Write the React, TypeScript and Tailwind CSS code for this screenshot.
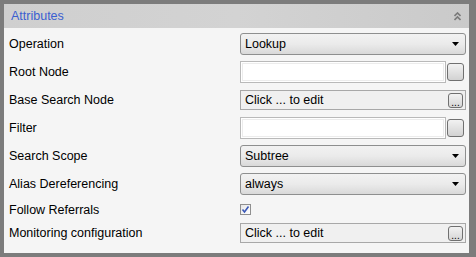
import React from "react";

const font = { fontFamily: '"Liberation Sans", Arial, sans-serif' };

function Arrow() {
  return (
    <svg width="7" height="4" viewBox="0 0 7 4" className="shrink-0">
      <polygon points="0,0 7,0 3.5,4" fill="#000" />
    </svg>
  );
}

function Combo({ value }: { value: string }) {
  return (
    <div className="w-[226px] h-[22px] flex items-center justify-between pl-[4px] pr-[6px] rounded-[3px] border border-[#8e8f8f] bg-gradient-to-b from-[#f2f2f2] via-[#ebebeb] to-[#d9d9d9] text-[12.5px] text-black">
      <span className="pt-[1px]">{value}</span>
      <Arrow />
    </div>
  );
}

function DotButton({ dots }: { dots?: boolean }) {
  return (
    <div className="w-[15px] h-[15px] rounded-[3px] border border-[#707070] bg-gradient-to-b from-[#f2f2f2] to-[#d6d6d6] flex items-end justify-center">
      {dots ? (
        <span className="text-[10px] leading-[8px] text-black">...</span>
      ) : null}
    </div>
  );
}

function TextBox() {
  return (
    <div className="w-[226px] h-[22px] flex items-center gap-[1px]">
      <div className="w-[206px] h-[22px] border border-[#b9b9b9] bg-white p-[1px]">
        <div className="w-full h-full border border-[#ececec] bg-white" />
      </div>
      <div className="w-[17px] h-[18px] rounded-[3px] border border-[#707070] bg-gradient-to-b from-[#f2f2f2] to-[#d2d2d2]" />
    </div>
  );
}

function ClickBox() {
  return (
    <div className="w-[226px] h-[20px] border border-[#a8a8a8] bg-[#f0f0f0] flex items-center justify-between pl-[4px] pr-[2px] text-[12.5px] text-black">
      <span className="pt-[1px]">Click ... to edit</span>
      <DotButton dots />
    </div>
  );
}

function Checkbox() {
  return (
    <div className="w-[11px] h-[11px] border border-[#8f8f8f] bg-gradient-to-br from-[#e6e6e6] to-[#ffffff] flex items-center justify-center">
      <svg width="9" height="9" viewBox="0 0 9 9">
        <path d="M1.5 4.5 L3.5 7 L7.5 1.5" stroke="#3a58b8" strokeWidth="1.6" fill="none" />
      </svg>
    </div>
  );
}

function Row({ label, h, children }: { label: string; h: string; children: React.ReactNode }) {
  return (
    <div className={`flex items-center ${h}`}>
      <div className="w-[236px] pl-[5px] pt-[1px] text-[12.5px] text-black">{label}</div>
      <div className="flex items-center">{children}</div>
    </div>
  );
}

export default function App() {
  return (
    <div className="w-[476px] h-[257px] bg-[#7c7c7c] pt-[4px] pl-[4px] pr-[7px] pb-[4px]" style={font}>
      <div className="w-full h-full flex flex-col bg-[#f5f5f5]">
        <div className="h-[24px] shrink-0 flex items-center justify-between pl-[7px] pr-[8px] bg-gradient-to-r from-[#cfcfcf] via-[#d3d3d3] to-[#cacaca]">
          <span className="text-[12.5px] text-[#3b5fd0] pt-[1px]">Attributes</span>
          <svg width="7" height="9" viewBox="0 0 7 9">
            <path d="M0.5 4 L3.5 1 L6.5 4" stroke="#7a7a7a" strokeWidth="1.6" fill="none" />
            <path d="M0.5 8 L3.5 5 L6.5 8" stroke="#7a7a7a" strokeWidth="1.6" fill="none" />
          </svg>
        </div>
        <div className="flex flex-col pt-[2px]">
          <Row label="Operation" h="h-[28px]"><Combo value="Lookup" /></Row>
          <Row label="Root Node" h="h-[28px]"><TextBox /></Row>
          <Row label="Base Search Node" h="h-[28px]"><ClickBox /></Row>
          <Row label="Filter" h="h-[28px]"><TextBox /></Row>
          <Row label="Search Scope" h="h-[28px]"><Combo value="Subtree" /></Row>
          <Row label="Alias Dereferencing" h="h-[28px]"><Combo value="always" /></Row>
          <Row label="Follow Referrals" h="h-[23px]"><Checkbox /></Row>
          <Row label="Monitoring configuration" h="h-[24px]"><ClickBox /></Row>
        </div>
      </div>
    </div>
  );
}
